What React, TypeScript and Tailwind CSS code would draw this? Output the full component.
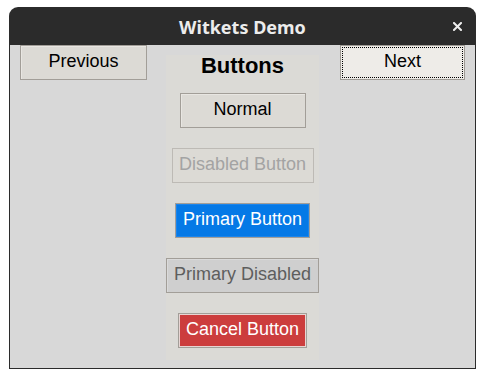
import React from "react";

type Btn = { label: string; width: string; kind: "normal" | "disabled" | "primary" | "primaryDisabled" | "cancel" };

const buttons: Btn[] = [
  { label: "Normal", width: "w-[126px]", kind: "normal" },
  { label: "Disabled Button", width: "w-[142px]", kind: "disabled" },
  { label: "Primary Button", width: "w-[135px]", kind: "primary" },
  { label: "Primary Disabled", width: "w-[153px]", kind: "primaryDisabled" },
  { label: "Cancel Button", width: "w-[129px]", kind: "cancel" },
];

const kindClass = {
  normal: "bg-[#dcdad5] border-[#a29e98] text-black shadow-[inset_1px_1px_0_#e8e6e2]",
  disabled: "bg-[#dcdad5] border-[#bdbab5] text-[#a3a3a3]",
  primary: "bg-[#0579e6] border-[#a29e98] text-white shadow-[inset_0_0_0_1px_#1d85ea]",
  primaryDisabled: "bg-[#cfcfcf] border-[#a29e98] text-[#5e5e5e] shadow-[inset_1px_1px_0_#dadada]",
  cancel: "bg-[#cc3d3d] border-[#a29e98] text-white shadow-[inset_0_0_0_1px_#e8d4d2]",
};

export default function App() {
  return (
    <div className="w-[485px] h-[378px] bg-white pt-[7px] pl-[9px]" style={{ fontFamily: '"Liberation Sans", Arial, sans-serif' }}>
      <div className="w-[467px] h-[362px] flex flex-col">
        {/* title bar */}
        <div className="h-[38px] bg-[#2b2b2b] rounded-t-[9px] flex items-center relative">
          <span className="w-full text-center text-[#ececec] text-[18px] font-bold leading-none pt-[1px]" style={{ fontFamily: '"Noto Sans", sans-serif' }}>
            Witkets Demo
          </span>
          <svg className="absolute left-[444px] top-[15px]" width="9" height="9" viewBox="0 0 9 9">
            <path d="M1 1 L8 8 M8 1 L1 8" stroke="#eeeeee" strokeWidth="2" strokeLinecap="square" />
          </svg>
        </div>

        {/* content */}
        <div className="flex-1 bg-[#d8d8d8] border border-t-0 border-[#2b2b2b] flex items-start px-[10px]">
          <button className="w-[127px] h-[35px] pb-[3px] bg-[#dcdad5] border border-[#a29e98] shadow-[inset_1px_1px_0_#e8e6e2] text-[18px] text-black leading-none">
            Previous
          </button>

          <div className="w-[153px] ml-[19px] mt-[10px] bg-[#dbdad6] flex flex-col items-center pb-[12px]">
            <div className="h-[24px] text-[22px] font-bold leading-[22px] text-black">Buttons</div>
            <div className="mt-[14px] flex flex-col items-center gap-[20px] w-full">
              {buttons.map((b) => (
                <button key={b.label} className={`${b.width} h-[35px] pb-[3px] border text-[18px] leading-none ${kindClass[b.kind]}`}>
                  {b.label}
                </button>
              ))}
            </div>
          </div>

          <button className="w-[125px] h-[35px] pb-[3px] ml-[21px] bg-[#eeece8] border border-[#9e9a94] text-[18px] text-black leading-none outline-dotted outline-1 outline-black outline-offset-[-3px]">
            Next
          </button>
        </div>
      </div>
    </div>
  );
}
